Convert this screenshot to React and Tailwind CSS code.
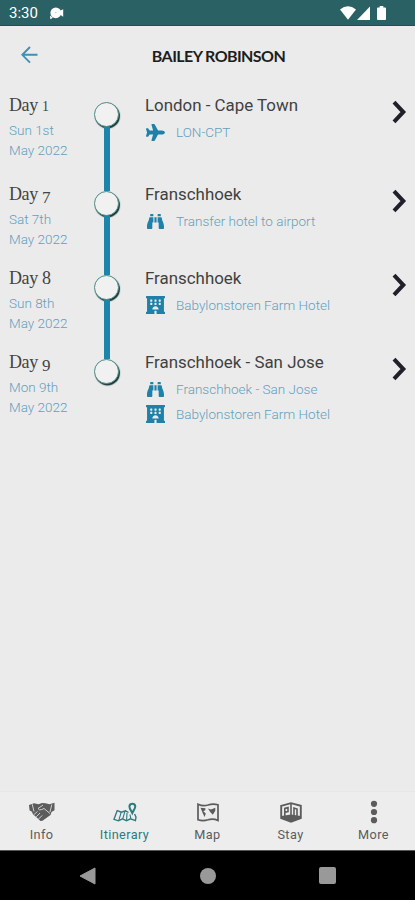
// src/App.jsx
import React, { useState } from 'react';
import { FaPlane, FaBinoculars, FaHotel } from 'react-icons/fa';

const days = [
  {
    number: '1',
    numberClass: 'text-[14px]',
    date: ['Sun 1st', 'May 2022'],
    title: 'London - Cape Town',
    height: 'h-[88.5px]',
    items: [{ type: 'flight', label: 'LON-CPT' }],
  },
  {
    number: '7',
    numberClass: 'text-[17px] align-[-3px]',
    date: ['Sat 7th', 'May 2022'],
    title: 'Franschhoek',
    height: 'h-[84px]',
    items: [{ type: 'activity', label: 'Transfer hotel to airport' }],
  },
  {
    number: '8',
    numberClass: 'text-[18px]',
    date: ['Sun 8th', 'May 2022'],
    title: 'Franschhoek',
    height: 'h-[84px]',
    items: [{ type: 'hotel', label: 'Babylonstoren Farm Hotel' }],
  },
  {
    number: '9',
    numberClass: 'text-[17px] align-[-3px]',
    date: ['Mon 9th', 'May 2022'],
    title: 'Franschhoek - San Jose',
    height: 'h-[84px]',
    items: [
      { type: 'activity', label: 'Franschhoek - San Jose' },
      { type: 'hotel', label: 'Babylonstoren Farm Hotel' },
    ],
  },
];

const itemIcons = {
  flight: <FaPlane size={19} />,
  activity: <FaBinoculars size={17} />,
  hotel: <FaHotel className="h-[18px] w-[19px]" preserveAspectRatio="none" />,
};

const StatusBar = () => (
  <div className="flex h-[26px] shrink-0 items-center border-b border-[#1e5054] bg-[#2a6165] pl-[9px] pr-[28px] pt-[2px] text-white">
    <span className="text-[15px] leading-none">3:30</span>
    <svg className="ml-[11px]" width="15" height="13" viewBox="0 0 15 13" fill="currentColor">
      <circle cx="6.8" cy="5.8" r="5.4" />
      <path d="M1 8.5 L4 10.8 L1.3 12.2 Z M11.5 3.5 L14.2 2.2 V9.8 L11.5 8 Z" />
      <circle cx="6.8" cy="5.5" r="0.8" fill="#b5cccd" />
    </svg>
    <div className="ml-auto flex items-center pb-[1px]">
      <svg width="16" height="14" viewBox="0 0 16 14" fill="currentColor">
        <path d="M0 3.6 Q8 -3 16 3.6 L8 13.8 Z" />
      </svg>
      <svg className="ml-[1px]" width="13" height="14" viewBox="0 0 13 14" fill="currentColor">
        <path d="M13 0.5 V14 H0 Z" />
      </svg>
      <svg className="ml-[7px] mr-[1px]" width="9" height="14" viewBox="0 0 10 14" preserveAspectRatio="none" fill="currentColor">
        <path d="M3 0 H7 V1.5 H9 Q10 1.5 10 2.5 V13 Q10 14 9 14 H1 Q0 14 0 13 V2.5 Q0 1.5 1 1.5 H3 Z" />
      </svg>
    </div>
  </div>
);

const Header = () => (
  <header className="grid h-[66px] shrink-0 grid-cols-[1fr_auto_1fr] items-start pl-[21px]">
    <button aria-label="Back" className="mt-[20px] w-[18px] text-[#3f90b3]">
      <svg width="18" height="18" viewBox="0 0 18 18" fill="none" stroke="currentColor" strokeWidth="1.9">
        <path d="M16.5 8.8 H1.5 M9 1 L1.3 8.8 L9 16.6" />
      </svg>
    </button>
    <h1 className="mt-[18px] mr-[-1px] font-['Lato'] text-[16px] font-bold leading-[24px] tracking-[-0.58px] text-[#1d1d1d]">
      BAILEY ROBINSON
    </h1>
  </header>
);

const Timeline = ({ first, last }) => (
  <div className="flex w-[25px] flex-col items-center">
    <div className={`h-[10px] w-[6px] shrink-0 ${first ? '' : 'bg-[#1d84aa]'}`} />
    <div className="size-[25px] shrink-0 rounded-full border-[1.5px] border-[#4c8c84] bg-[#f0f1f0] shadow-[1px_1.5px_1px_#16383a]" />
    {!last && <div className="w-[6px] flex-1 bg-[#1d84aa]" />}
  </div>
);

const DayRow = ({ entry, first, last }) => (
  <div className={`flex ${entry.height}`}>
    <div className="w-[85px] pt-[3px]">
      <h2 className="h-[20px] whitespace-nowrap font-['Liberation_Serif'] text-[18px] leading-[20px] tracking-[-0.4px] text-[#444]">
        Day <span className={`leading-none ${entry.numberClass}`}>{entry.number}</span>
      </h2>
      <p className="mt-[5px] text-[13.5px] font-light leading-[20px] text-[#649fbd]">
        {entry.date[0]}
        <br />
        {entry.date[1]}
      </p>
    </div>
    <Timeline first={first} last={last} />
    <div className="flex-1 pl-[26px] pt-[2px]">
      <h3 className="whitespace-nowrap text-[16.9px] leading-[22px] text-[#414141]">{entry.title}</h3>
      <ul className="mt-[4px]">
        {entry.items.map((item) => (
          <li key={item.label} className="flex h-[25px] items-center text-[#1f80a8]">
            <span className="flex w-[20px] justify-center">{itemIcons[item.type]}</span>
            <span className="ml-[11px] whitespace-nowrap text-[13.5px] font-light text-[#649fbd]">{item.label}</span>
          </li>
        ))}
      </ul>
    </div>
    <svg className="mr-[8px] mt-[8px]" width="15" height="24" viewBox="0 0 15 24" fill="none" stroke="#20202a" strokeWidth="4">
      <path d="M2 2.2 L11.3 12 L2 21.8" />
    </svg>
  </div>
);

const HandshakeIcon = () => (
  <svg width="26" height="20" viewBox="0 0 26 20" fill="currentColor">
    <path d="M0 3 L5 1.2 L9.5 2.2 L13 1 L16.5 1.2 L20.5 2.2 L25.5 0.8 V8.2 L22.5 10 L21.5 13 L13.5 18.8 L11.5 19 L3.8 12 L3 9.8 L0.6 8.5 Z" />
    <path
      d="M3.2 2.2 L5 9.5 M22.8 2.5 L21 10 M14 3 L9 6.5 Q10 8.6 12.5 7.6 L15 6.5 L21 11.5 M5 12.5 L8.5 9.5 M7.2 14.8 L11 11 M9.6 17 L13.2 13.4"
      fill="none"
      stroke="#dcdcdc"
      strokeWidth="0.9"
    />
  </svg>
);

const ItineraryIcon = () => (
  <svg width="24" height="20" viewBox="0 0 24 20" fill="none" stroke="currentColor" strokeWidth="1.4">
    <path d="M15.5 10.5 L12.5 8.8 L8.4 10.2 L4.2 8.6 L1 17.3 L5.5 18.8 L9.5 16.8 L13.5 18.8 L17.5 16.8 L22.4 18.6 L23 15 L21.6 12" />
    <path d="M8.2 10.2 L5.8 18.4 M12 9.2 L9.8 16.6 M14 11 L13.6 18.6 M17 12.5 L17.8 16.6" strokeWidth="1.1" />
    <path d="M19.3 11 C18.2 8.5 16.4 6.8 16.4 4.2 A3 3 0 0 1 22.3 4.2 C22.3 6.8 20.4 8.5 19.3 11 Z" strokeWidth="2" />
  </svg>
);

const MapIcon = () => (
  <svg width="22" height="19" viewBox="0 0 22 19" fill="none" stroke="currentColor" strokeWidth="1.7">
    <path d="M1 1.2 Q6 3.6 11 2 Q16 0.2 21 1.8 V17.4 Q16 15 11 16.8 Q6 18.4 1 16.8 Z" />
    <path d="M3.5 4.8 L8.5 5.2 L8.2 7.2 L6.3 8.2 L8.8 10.6 L7.6 14 L6 10.8 Z M11 5.5 L14 6.5 L18.3 4.8 V7.8 L15.8 11.8 L13.2 9 Z" fill="currentColor" stroke="none" />
  </svg>
);

const StayIcon = () => (
  <svg width="22" height="21" viewBox="0 0 22 21" fill="none" stroke="currentColor" strokeWidth="1.9">
    <path d="M1.2 3.8 L11 1.2 L20.8 3.8 V16 L11 19.8 L1.2 16 Z" />
    <path d="M1.5 14 L11 12.4 L20.5 14 V16.2 L11 20 L1.5 16.2 Z" fill="currentColor" stroke="none" />
    <path d="M11 1 V14 M4.8 15 V6.4 L8 5.6 V9.6 L5 10.3 M14 14 V6 L17 7 V15" strokeWidth="1.6" />
  </svg>
);

const MoreIcon = () => (
  <svg width="8" height="24" viewBox="0 0 8 24" fill="currentColor">
    <circle cx="4" cy="3.8" r="3.1" />
    <circle cx="4" cy="12" r="3.1" />
    <circle cx="4" cy="20.2" r="3.1" />
  </svg>
);

const tabs = [
  { name: 'Info', icon: <HandshakeIcon /> },
  { name: 'Itinerary', icon: <ItineraryIcon /> },
  { name: 'Map', icon: <MapIcon /> },
  { name: 'Stay', icon: <StayIcon /> },
  { name: 'More', icon: <MoreIcon /> },
];

const App = () => {
  const [active, setActive] = useState('Itinerary');

  return (
    <div className="flex h-[900px] w-[415px] flex-col overflow-hidden bg-[#ebebeb] font-['Roboto',sans-serif]">
      <StatusBar />
      <Header />

      <main className="flex-1 pl-[9px]">
        {days.map((entry, i) => (
          <DayRow key={entry.number} entry={entry} first={i === 0} last={i === days.length - 1} />
        ))}
      </main>

      <nav className="grid h-[59px] shrink-0 grid-cols-5 border-t border-[#e6e6e6] bg-[#ededed]">
        {tabs.map((tab) => (
          <button
            key={tab.name}
            onClick={() => setActive(tab.name)}
            className={`flex flex-col items-center pt-[8px] ${active === tab.name ? 'text-[#2e7b7e]' : 'text-[#5c5c5c]'}`}
          >
            <span className="flex h-[24px] items-center">{tab.icon}</span>
            <span className="mt-[3px] text-[12.7px] leading-[16px] tracking-[0.4px]">{tab.name}</span>
          </button>
        ))}
      </nav>

      {/* Android system buttons */}
      <div className="flex h-[50px] shrink-0 items-center justify-between border-t border-[#555] bg-black pl-[79px] pr-[79px] text-[#999]">
        <svg width="17" height="18" viewBox="0 0 17 18" fill="currentColor">
          <path d="M16 1 V17 L1 9 Z" stroke="currentColor" strokeLinejoin="round" />
        </svg>
        <div className="size-[16px] rounded-full bg-[#999]" />
        <div className="size-[17px] rounded-[2px] bg-[#999]" />
      </div>
    </div>
  );
};

export default App;
